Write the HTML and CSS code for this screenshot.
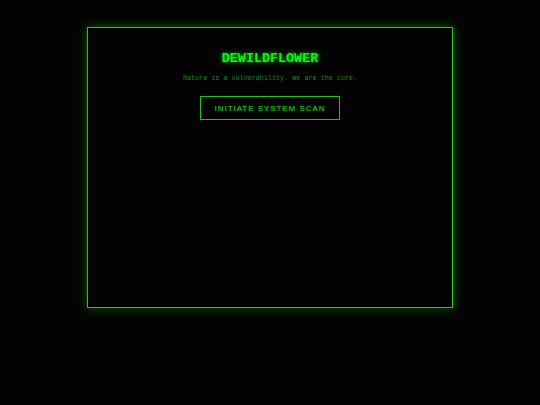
FILE: index.html
```html
<!DOCTYPE html>
<html>
<head>
<meta charset="utf-8">
<link rel="stylesheet" href="styles.css">
</head>
<body>
<div class="terminal">
  <h1 class="title">DEWILDFLOWER</h1>
  <p class="tagline">Nature is a vulnerability. We are the cure.</p>
  <button class="scan">INITIATE SYSTEM SCAN</button>
</div>
</body>
</html>
```
FILE: styles.css
```css
html, body {
  margin: 0;
  padding: 0;
  background: #030303;
  height: 100%;
}
.terminal {
  box-sizing: border-box;
  width: 366px;
  height: 281px;
  margin: 27px auto 0;
  border: 1px solid #2ac52a;
  box-shadow: 0 0 10px rgba(0, 255, 0, 0.4);
  display: flex;
  flex-direction: column;
  align-items: center;
  padding-top: 23px;
}
.title {
  margin: 0;
  font-family: "Liberation Mono", "Courier New", monospace;
  font-weight: bold;
  font-size: 13.4px;
  line-height: 15px;
  color: #00ff00;
  text-shadow: 0 0 5px rgba(0, 255, 0, 0.75);
}
.tagline {
  margin: 7px 0 0;
  font-family: "Liberation Mono", "Courier New", monospace;
  font-size: 6.75px;
  line-height: 10px;
  color: #178a17;
}
.scan {
  margin-top: 13px;
  width: 140px;
  height: 24px;
  background: transparent;
  border: 1px solid #22c022;
  color: #2bd02b;
  font-family: "Liberation Sans", Arial, sans-serif;
  font-size: 8px;
  font-weight: normal;
  letter-spacing: 0.95px;
  padding: 0;
  text-shadow: 0 0 3px rgba(0, 255, 0, 0.4);
}
```
